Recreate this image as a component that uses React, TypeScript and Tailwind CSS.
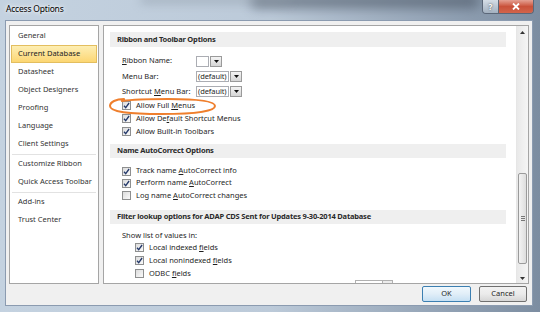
import type { ReactNode } from "react";

const navItems: (string | null)[] = [
  "General",
  "Current Database",
  "Datasheet",
  "Object Designers",
  "Proofing",
  "Language",
  "Client Settings",
  null,
  "Customize Ribbon",
  "Quick Access Toolbar",
  null,
  "Add-ins",
  "Trust Center",
];

function U({ children }: { children: ReactNode }) {
  return <span className="underline decoration-[0.5px] underline-offset-[1px]">{children}</span>;
}

function CheckBox({ checked }: { checked: boolean }) {
  return (
    <span className="flex h-[9px] w-[9px] shrink-0 items-center justify-center border border-[#8e8f8f] bg-gradient-to-br from-[#dcdcdc] to-[#fafafa]">
      {checked && (
        <svg width="7" height="7" viewBox="0 0 7 7">
          <path d="M1 3.7 L2.7 5.6 L6.1 1" fill="none" stroke="#24396a" strokeWidth="1.3" />
        </svg>
      )}
    </span>
  );
}

function CheckRow({
  checked,
  children,
  h,
  indent = "pl-[18px]",
}: {
  checked: boolean;
  children: ReactNode;
  h: string;
  indent?: string;
}) {
  return (
    <div className={`flex shrink-0 items-center gap-[5px] ${h} ${indent}`}>
      <CheckBox checked={checked} />
      <span className="whitespace-nowrap">{children}</span>
    </div>
  );
}

function Combo({ text, w }: { text: string; w: string }) {
  return (
    <div className="flex h-[11px] gap-px">
      <div className={`${w} flex items-center whitespace-nowrap border border-[#abadb3] bg-white pl-px text-[7.5px] tracking-[-0.1px]`}>
        {text}
      </div>
      <div className="flex w-[12px] items-center justify-center border border-[#9a9a9a] bg-gradient-to-b from-[#f4f4f4] to-[#d6d6d6]">
        <svg width="5" height="3" viewBox="0 0 5 3">
          <path d="M0 0 H5 L2.5 3 Z" fill="#111" />
        </svg>
      </div>
    </div>
  );
}

function Band({ children, mt, h }: { children: ReactNode; mt: string; h: string }) {
  return (
    <div
      className={`${mt} ${h} ml-[6px] mr-[10px] flex shrink-0 items-center whitespace-nowrap bg-[#efefef] pl-[7px] font-bold tracking-[-0.2px] text-[#2a2a2a]`}
    >
      {children}
    </div>
  );
}

export default function App() {
  return (
    <div className="relative flex h-[312px] w-[540px] flex-col overflow-hidden bg-gradient-to-r from-[#c4d2e0] via-[#bccad9] to-[#7c8da1] font-['Noto_Sans',sans-serif] text-[7.5px] text-[#1e1e1e]">
      {/* glass streak behind the title bar */}
      <div className="absolute left-[250px] top-[-6px] h-[14px] w-[230px] rounded-full bg-[#46515f] opacity-60 blur-[6px]" />
      <div className="absolute left-[140px] top-[-4px] h-[8px] w-[150px] rounded-full bg-[#8d99a6] opacity-50 blur-[5px]" />

      {/* title bar */}
      <div className="relative flex h-[20px] shrink-0 items-start">
        <span className="ml-[6px] mt-[3px] text-[8.5px] tracking-[-0.2px] text-black [text-shadow:0_0_6px_#fff,0_0_3px_#fff]">
          Access Options
        </span>
        <div className="ml-auto mr-[6px] flex h-[14px] overflow-hidden rounded-b-[4px] border border-t-0 border-[#5b6778]">
          <div className="flex w-[16px] items-center justify-center border-r border-[#5b6778] bg-gradient-to-b from-[#d5dde6] to-[#a3b1c0] text-[8px] font-bold text-white [text-shadow:0_0_2px_#333]">
            ?
          </div>
          <div className="flex w-[34px] items-center justify-center bg-gradient-to-b from-[#e4a093] via-[#c9513a] to-[#d2644b]">
            <svg width="8" height="7" viewBox="0 0 8 7">
              <path d="M1 0.5 L7 6.5 M7 0.5 L1 6.5" stroke="#fff" strokeWidth="1.8" />
            </svg>
          </div>
        </div>
      </div>

      {/* client area */}
      <div className="relative ml-[5px] mr-[7px] flex h-[286px] shrink-0 flex-col border border-[#8b9bb0] bg-[#f0f0f0] px-[3px] pt-[4px]">
        <div className="flex h-[259px] shrink-0 gap-[4px]">
          {/* left navigation */}
          <div className="flex w-[90px] flex-col border border-[#a5a5a5] bg-white pt-px">
            {navItems.map((item, i) =>
              item === null ? (
                <div key={i} className="flex h-[2px] shrink-0 items-center px-[2px]">
                  <div className="h-px w-full bg-[#e2e2e2]" />
                </div>
              ) : item === "Current Database" ? (
                <div
                  key={i}
                  className="mx-px flex h-[18px] shrink-0 items-center border border-[#e3be5f] bg-gradient-to-b from-[#fdeeb3] to-[#fcd672] pl-[6px] text-[#222]"
                >
                  {item}
                </div>
              ) : (
                <div key={i} className="flex h-[18px] shrink-0 items-center pl-[8px] text-[#333]">
                  {item}
                </div>
              )
            )}
          </div>

          {/* right panel */}
          <div className="flex flex-1 border border-[#a5a5a5] bg-white">
            <div className="relative flex flex-1 flex-col overflow-hidden pt-px">
              <Band mt="mt-[5px]" h="h-[15px]">
                Ribbon and Toolbar Options
              </Band>

              <div className="mt-[6px] flex h-[16px] shrink-0 items-center pl-[18px]">
                <span className="w-[74px]">
                  <U>R</U>ibbon Name:
                </span>
                <Combo text="" w="w-[13px]" />
              </div>
              <div className="flex h-[15px] shrink-0 items-center pl-[18px]">
                <span className="w-[74px]">Menu Bar:</span>
                <Combo text="(default)" w="w-[33px]" />
              </div>
              <div className="flex h-[15px] shrink-0 items-center pl-[18px]">
                <span className="w-[74px]">
                  Shortcut <U>M</U>enu Bar:
                </span>
                <Combo text="(default)" w="w-[33px]" />
              </div>

              <CheckRow checked h="h-[13px]">
                Allow Full <U>M</U>enus
              </CheckRow>
              <CheckRow checked h="h-[13px]">
                Allow De<U>f</U>ault Shortcut Menus
              </CheckRow>
              <CheckRow checked h="h-[13px]">
                Allow Built-in Toolbars
              </CheckRow>

              <Band mt="mt-[6px]" h="h-[14px]">
                Name AutoCorrect Options
              </Band>
              <div className="h-[7px] shrink-0" />
              <CheckRow checked h="h-[12px]">
                Track name <U>A</U>utoCorrect info
              </CheckRow>
              <CheckRow checked h="h-[12px]">
                Perform name <U>A</U>utoCorrect
              </CheckRow>
              <CheckRow checked={false} h="h-[13px]">
                Log name <U>A</U>utoCorrect changes
              </CheckRow>

              <Band mt="mt-[8px]" h="h-[14px]">
                Filter lookup options for ADAP CDS Sent for Updates 9-30-2014 Database
              </Band>
              <div className="mt-[6px] flex h-[11px] shrink-0 items-center pl-[18px]">Show list of values in:</div>
              <CheckRow checked h="h-[13px]" indent="pl-[31px]">
                Local indexed <U>f</U>ields
              </CheckRow>
              <CheckRow checked h="h-[13px]" indent="pl-[31px]">
                Local nonindexed <U>f</U>ields
              </CheckRow>
              <CheckRow checked={false} h="h-[13px]" indent="pl-[31px]">
                ODBC <U>f</U>ields
              </CheckRow>
              <div className="ml-[251px] flex h-[12px] w-[38px] shrink-0 border border-[#b0b0b0]">
                <div className="flex-1" />
                <div className="w-[10px] border-l border-[#b0b0b0] bg-[#ececec]" />
              </div>

              {/* hand-drawn highlight */}
              <svg
                className="pointer-events-none absolute left-[4px] top-[70px]"
                width="110"
                height="22"
                viewBox="0 0 110 22"
              >
                <path
                  d="M16 3 C8 3 2 6 2 10 C2 16 20 18 54 18 C88 18 107 15 107 10 C107 5 90 3 60 3 C40 3 24 3.5 14 5"
                  fill="none"
                  stroke="#ef7f2d"
                  strokeWidth="2"
                  strokeLinecap="round"
                />
              </svg>
            </div>

            {/* scrollbar */}
            <div className="flex w-[12px] flex-col border-l border-[#e6e6e6] bg-gradient-to-r from-[#e9e9e9] to-[#f5f5f5]">
              <div className="flex h-[12px] shrink-0 items-center justify-center">
                <svg width="5" height="3" viewBox="0 0 5 3">
                  <path d="M0 3 H5 L2.5 0 Z" fill="#333" />
                </svg>
              </div>
              <div className="h-[135px] shrink-0" />
              <div className="mx-px flex h-[91px] shrink-0 items-center justify-center rounded-[2px] border border-[#9b9b9b] bg-gradient-to-r from-[#f3f3f3] to-[#dedede]">
                <div className="flex flex-col gap-px">
                  <div className="h-px w-[4px] bg-[#777]" />
                  <div className="h-px w-[4px] bg-[#777]" />
                  <div className="h-px w-[4px] bg-[#777]" />
                </div>
              </div>
              <div className="flex flex-1 items-end justify-center pb-[3px]">
                <svg width="5" height="3" viewBox="0 0 5 3">
                  <path d="M0 0 H5 L2.5 3 Z" fill="#333" />
                </svg>
              </div>
            </div>
          </div>
        </div>

        {/* buttons */}
        <div className="mt-[2px] flex h-[16px] shrink-0 justify-end gap-[8px] pr-[2px]">
          <button className="w-[49px] rounded-[2px] border border-[#3c7fb1] bg-gradient-to-b from-[#f0f8fd] via-[#e1eef8] to-[#c6e0f3] text-[7.5px]">
            OK
          </button>
          <button className="w-[48px] rounded-[2px] border border-[#707070] bg-gradient-to-b from-[#f2f2f2] via-[#ebebeb] to-[#d6d6d6] text-[7.5px]">
            Cancel
          </button>
        </div>
      </div>
    </div>
  );
}
